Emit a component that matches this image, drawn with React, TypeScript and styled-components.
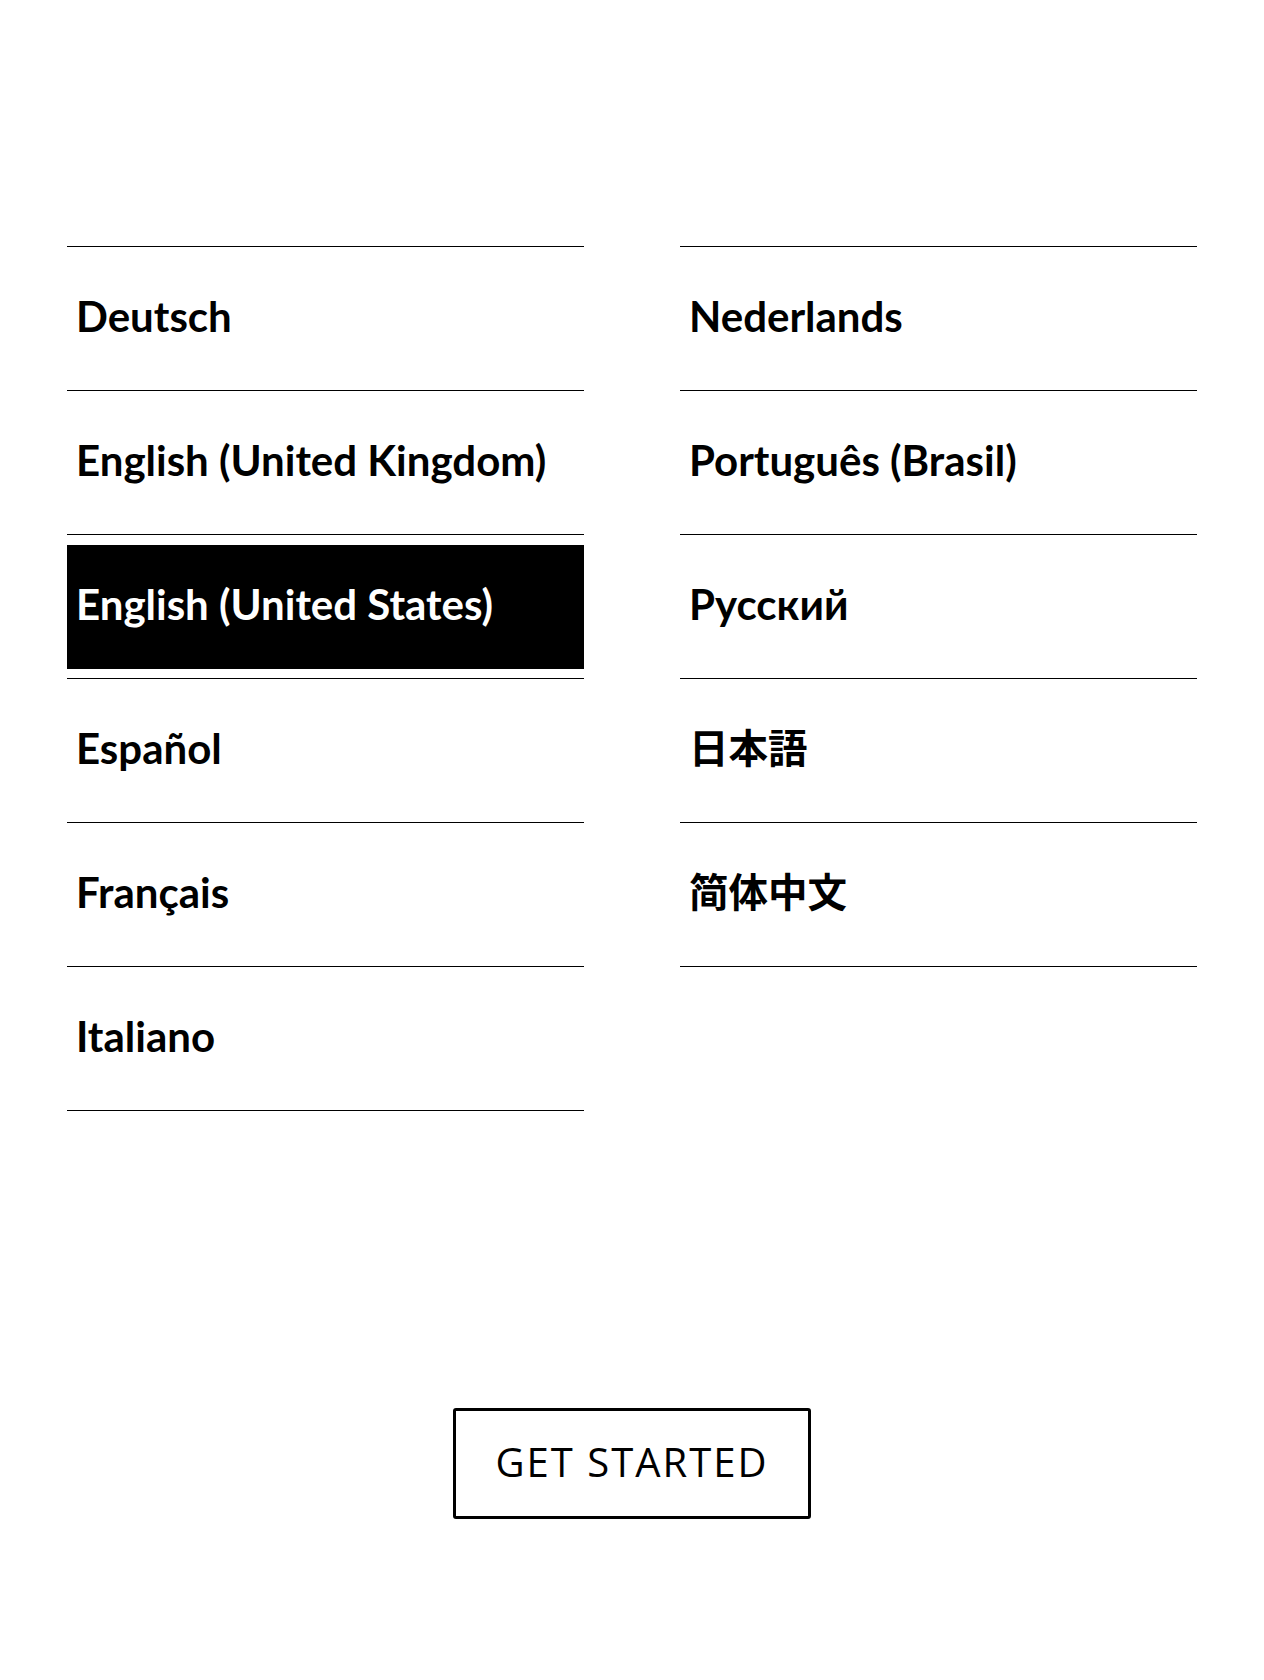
import React from "react";
import styled, { createGlobalStyle } from "styled-components";

type Language = { name: string; cjk?: boolean };

const columns: Language[][] = [
  [
    { name: "Deutsch" },
    { name: "English (United Kingdom)" },
    { name: "English (United States)" },
    { name: "Español" },
    { name: "Français" },
    { name: "Italiano" },
  ],
  [
    { name: "Nederlands" },
    { name: "Português (Brasil)" },
    { name: "Русский" },
    { name: "日本語", cjk: true },
    { name: "简体中文", cjk: true },
  ],
];

const SELECTED = "English (United States)";

const App = () => {
  return (
    <>
      <GlobalStyle />
      <Page>
        <Columns>
          {columns.map((column, i) => (
            <LanguageList key={i}>
              {column.map((lang) => (
                <LanguageRow key={lang.name}>
                  <LanguageButton $selected={lang.name === SELECTED} $cjk={!!lang.cjk}>
                    {lang.name}
                  </LanguageButton>
                </LanguageRow>
              ))}
            </LanguageList>
          ))}
        </Columns>

        <Footer>
          <StartButton>GET STARTED</StartButton>
        </Footer>
      </Page>
    </>
  );
};

const GlobalStyle = createGlobalStyle`
  body {
    margin: 0;
    background: #fff;
    font-family: Lato, "Noto Sans", "Noto Sans CJK SC", sans-serif;
  }
`;

const Page = styled.main`
  width: 1264px;
  min-height: 1680px;
  box-sizing: border-box;
  padding-top: 246px;

  display: flex;
  flex-direction: column;
`;

const Columns = styled.div`
  display: grid;
  grid-template-columns: 517px 517px;
  column-gap: 96px;
  padding: 0 67px;
  align-items: start;
`;

const LanguageList = styled.ul`
  margin: 0;
  padding: 0;
  list-style: none;
  border-top: 1px solid #000;
`;

const LanguageRow = styled.li`
  box-sizing: content-box;
  height: 124px;
  padding: 10px 0 9px;
  border-bottom: 1px solid #000;

  display: flex;
  align-items: center;
`;

const LanguageButton = styled.div<{ $selected: boolean; $cjk: boolean }>`
  width: 100%;
  height: 100%;
  box-sizing: border-box;
  padding: 0 0 ${(p) => (p.$cjk ? "12px" : "6px")} 9px;

  display: flex;
  align-items: center;

  background: ${(p) => (p.$selected ? "#000" : "transparent")};
  color: ${(p) => (p.$selected ? "#fff" : "#000")};
  font-family: Lato, "Noto Sans CJK JP", "Noto Sans CJK SC", sans-serif;
  font-size: ${(p) => (p.$cjk ? "39.5px" : "42px")};
  font-weight: 700;
  white-space: nowrap;
`;

const Footer = styled.div`
  display: flex;
  justify-content: center;
  padding-top: 297px;
`;

const StartButton = styled.button`
  width: 358px;
  height: 111px;
  box-sizing: border-box;
  padding: 0 0 4px;

  border: 3.5px solid #000;
  border-radius: 3px;
  background: #fff;
  color: #000;

  font-family: "Open Sans", sans-serif;
  font-size: 40px;
  font-weight: 400;
  letter-spacing: 2px;
  cursor: pointer;
`;

export default App;
